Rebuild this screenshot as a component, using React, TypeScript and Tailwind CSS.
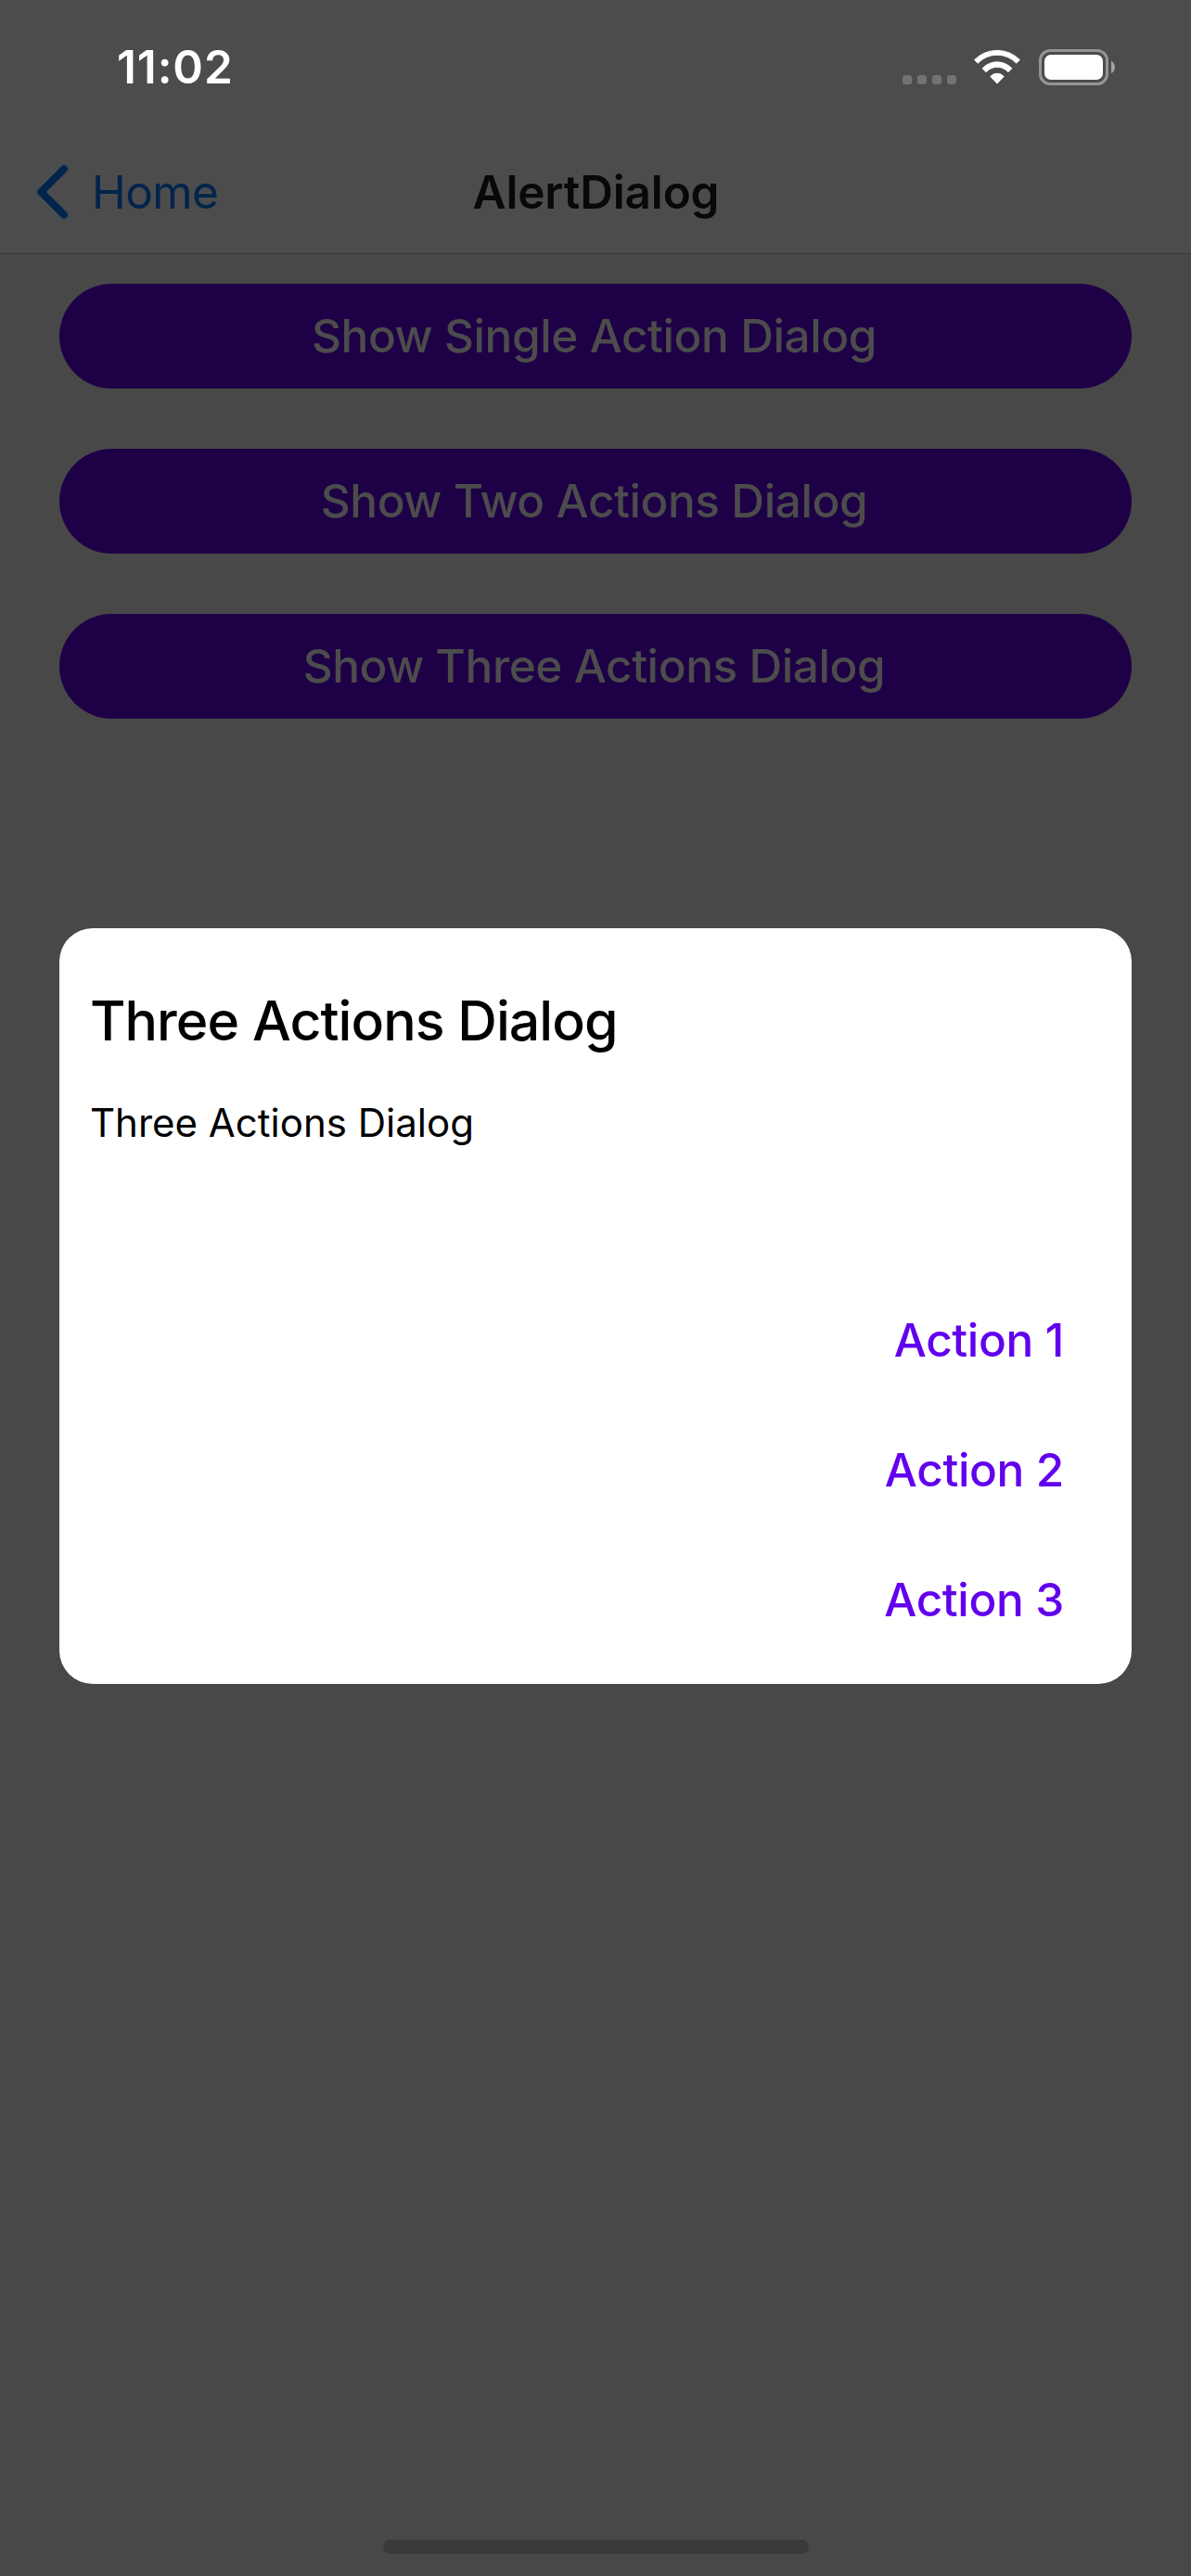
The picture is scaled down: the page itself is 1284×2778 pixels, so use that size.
import React from "react";

const demoButtons = ["Show Single Action Dialog", "Show Two Actions Dialog", "Show Three Actions Dialog"];
const dialogActions = ["Action 1", "Action 2", "Action 3"];

function WifiIcon() {
  return (
    <svg className="h-[38px] w-[52px]" viewBox="58.5 25 156 114" fill="#fff" stroke="#fff" strokeWidth="3" strokeLinejoin="round">
      <path d="M63.5 59.5 A103 103 0 0 1 209.5 59.5 L199 70.5 A86 86 0 0 0 74 70.5 Z" />
      <path d="M89 87 A65.5 65.5 0 0 1 184 87 L172.5 99 A48.5 48.5 0 0 0 100.5 99 Z" />
      <path d="M115 113.5 A28.5 28.5 0 0 1 158 113.5 L136.5 136 Z" />
    </svg>
  );
}

function StatusBar() {
  return (
    <div className="flex h-[145px] items-center justify-between pr-[82px] pl-[126px]">
      <span className="text-[49.5px] leading-[61px] font-semibold tracking-[0.9px] text-white">11:02</span>
      <div className="flex h-[39px] items-start">
        <div className="mt-7 mr-[18px] flex gap-1.5">
          {[0, 1, 2, 3].map((i) => (
            <span key={i} className="size-[10px] rounded-[3px] bg-[#737373]" />
          ))}
        </div>
        <WifiIcon />
        <div className="ml-[19px] h-[39px] w-[75px] rounded-[12px] border-3 border-[#949494] p-[3px]">
          <div className="h-full w-full rounded-[7px] bg-white" />
        </div>
        <svg className="mt-[13px] ml-[3px] h-[13px] w-1" viewBox="0 0 4 13">
          <path d="M0 0 C5.3 2.2 5.3 10.8 0 13 Z" fill="#a2a2a2" />
        </svg>
      </div>
    </div>
  );
}

function NavBar() {
  return (
    <div className="grid h-[124px] grid-cols-3 items-center text-[49.5px] leading-[60px]">
      <div className="flex items-center pl-[40px] text-[#00244c]">
        <svg className="h-[58px] w-[34px]" viewBox="0 0 34 58" fill="none" stroke="currentColor" strokeWidth="8" strokeLinecap="round" strokeLinejoin="round">
          <path d="M29 4.2 L4.3 29 L29 53.7" />
        </svg>
        <span className="ml-[25px] tracking-[-0.6px]">Home</span>
      </div>
      <h1 className="pl-px text-center font-semibold tracking-[-0.15px] text-[#080808]">AlertDialog</h1>
      <span />
    </div>
  );
}

function Dialog() {
  return (
    <div className="absolute inset-x-[64px] top-[1001px] flex h-[815px] flex-col rounded-[36px] bg-white pt-16 pl-[33px] text-black">
      <h2 className="text-[59px] leading-[72px] font-medium tracking-[-0.96px]">Three Actions Dialog</h2>
      <p className="mt-[49px] text-[42px] leading-[50px]">Three Actions Dialog</p>
      <div className="mt-[139px] flex flex-col items-end pr-[73px]">
        {dialogActions.map((label) => (
          <button key={label} className="h-[140px] text-[49.5px] leading-[60px] font-medium tracking-[-0.35px] text-[#6200ee]">
            {label}
          </button>
        ))}
      </div>
    </div>
  );
}

export default function App() {
  return (
    <div className="relative flex h-[2778px] w-[1284px] flex-col overflow-hidden bg-[#484848] font-[Inter,sans-serif]">
      <header className="h-[274px] border-b border-[#353535] bg-[#4c4c4c]">
        <StatusBar />
        <NavBar />
      </header>
      <main className="mt-8 flex flex-1 flex-col gap-[65px] px-16">
        {demoButtons.map((label) => (
          <button
            key={label}
            className="h-[113px] rounded-full bg-[#1e0046] pr-[3px] pb-0.5 text-center text-[49.5px] leading-[60px] font-medium tracking-[-0.42px] text-[#4c4c4c]"
          >
            {label}
          </button>
        ))}
      </main>
      <div className="mb-6 h-[15px] w-[459px] self-center rounded-full bg-[#3a3a3a]" />
      <Dialog />
    </div>
  );
}
